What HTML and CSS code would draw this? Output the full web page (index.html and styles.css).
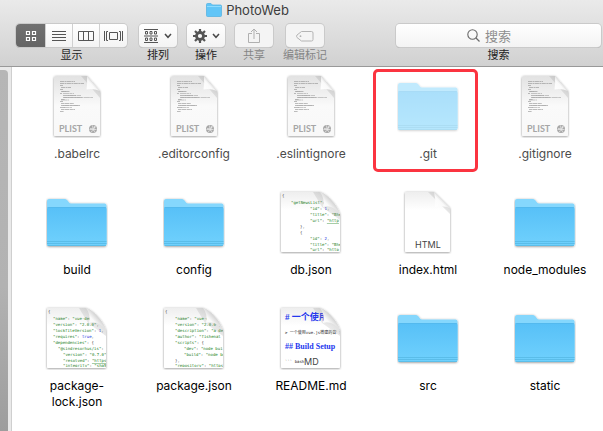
FILE: index.html
```html
<!DOCTYPE html>
<html lang="zh-CN">
<head>
<meta charset="utf-8">
<title>PhotoWeb</title>
<link rel="stylesheet" href="styles.css">
</head>
<body>
<svg class="defs" width="0" height="0" aria-hidden="true">
  <defs>
    <linearGradient id="folder-front" x1="0" y1="0" x2="0" y2="1">
      <stop offset="0" stop-color="#57c0f7"/><stop offset="1" stop-color="#70d1fd"/>
    </linearGradient>
    <linearGradient id="paper" x1="0" y1="0" x2="0" y2="1">
      <stop offset="0" stop-color="#eeeeee"/><stop offset=".3" stop-color="#ffffff"/>
    </linearGradient>
    <linearGradient id="paper-grey" x1="0" y1="0" x2="0" y2="1">
      <stop offset="0" stop-color="#e2e2e2"/><stop offset=".5" stop-color="#fafafa"/><stop offset="1" stop-color="#f8f8f8"/>
    </linearGradient>
    <linearGradient id="curl" x1="0" y1="1" x2="1" y2="0">
      <stop offset="0" stop-color="#ffffff"/><stop offset=".4" stop-color="#fafafa"/><stop offset=".6" stop-color="#d2d2d2"/>
    </linearGradient>
    <linearGradient id="curl-shade" x1="1" y1="0" x2="0" y2="1">
      <stop offset=".3" stop-color="#888888" stop-opacity=".3"/><stop offset=".9" stop-color="#888888" stop-opacity="0"/>
    </linearGradient>
    <filter id="drop" x="-10%" y="-10%" width="120%" height="120%">
      <feDropShadow dx="0" dy="0.6" stdDeviation="0.8" flood-color="#000" flood-opacity=".45"/>
    </filter>
    <clipPath id="wide-clip"><path d="M2 2H44C50 4 60 16 61 24V61H2Z"/></clipPath>

    <symbol id="folder" viewBox="0 0 62 64">
      <g filter="url(#drop)">
        <path d="M1 11Q1 9 3 9H19Q20.500 9 21.500 10.500L23 12.500Q23.700 13.500 25 13.500H58.500Q60.500 13.500 60.500 15.500V54Q60.500 56 58.500 56H3Q1 56 1 54Z" fill="#85d7fd"/>
      </g>
      <path d="M1 19Q1 17 3 17H58.500Q60.500 17 60.500 19V54Q60.500 56 58.500 56H3Q1 56 1 54Z" fill="url(#folder-front)"/>
      <path d="M1 51.500H60.500M1 53.500H60.500M1.500 55.500H60" stroke="#4badd9" stroke-width=".7" opacity=".75"/>
      <path d="M1.500 17.500H60" stroke="#50b4e8" stroke-width=".6"/>
    </symbol>

    <symbol id="plist" viewBox="0 0 50 64">
      <path filter="url(#drop)" d="M4 2H35L48 17V61Q48 62 47 62H3Q2 62 2 61V4Q2 2 4 2Z" fill="url(#paper-grey)"/>
      <path d="M29 2H35L48 17V24Z" fill="url(#curl-shade)"/>
      <path d="M35 2Q35.500 10 34.500 15.500Q41 14 48 17Z" fill="url(#curl)"/>
      <g stroke="#8b8b8b" stroke-width=".8" fill="none" opacity=".7">
        <path d="M8 7.500H23M8 9.500H32M8 11.500H11M9 13.500H19M8 15.500H11M10 17.500H14M8 19.500H10M11 21.500H24M11 23.500H30" stroke-dasharray="4 .5 2 .4"/>
        <path d="M9 17.500H18M9 25.500H13M8 27.500H11M9 29.500H22M9 31.500H28M8 33.500H13M9 35.500H23M8 37.500H12" stroke-dasharray="3 .4 5 .5"/>
        <path d="M11 19.500H22M15 21.500H29M12 23.500H41M9 26H17M11 31.500H27M11 33.500H20" stroke-dasharray="6 .4 3 .5" opacity=".8"/>
      </g>
      <text x="7" y="58" class="plist-text">PLIST</text>
      <circle cx="41" cy="55" r="4" fill="#a8a8a8"/>
      <path d="M38 54.500Q40.500 56 44 52.500M39 57.500Q42.500 57 42.500 52M40.500 51.500Q40.500 56 43 58M37.500 55.500H44.500" stroke="#eee" stroke-width=".7" fill="none"/>
    </symbol>

    <symbol id="wide-paper" viewBox="0 0 64 64">
      <path filter="url(#drop)" d="M2 2H41C48 4 58 15 61 24V61Q61 62 60 62H3Q2 62 2 61Z" fill="url(#paper)"/>
    </symbol>
    <symbol id="wide-curl" viewBox="0 0 64 64">
      <path d="M34 2H41C48 4 58 15 61 24V30L43 17Z" fill="url(#curl-shade)"/>
      <path d="M41 2Q46 8 44 17Q53 14 61 24C58 15 48 4 41 2Z" fill="url(#curl)"/>
    </symbol>
  </defs>
</svg>

<header class="toolbar">
  <h1 class="title">
    <svg width="16" height="16" viewBox="0 0 16 16"><path d="M.500 2.500Q.500 1.500 1.500 1.500H5L6.500 3H14.500Q15.500 3 15.500 4V13.500Q15.500 14.500 14.500 14.500H1.500Q.500 14.500.500 13.500Z" fill="#61c5f7" stroke="#58b4e2" stroke-width=".8"/><path d="M1 4.500H15" stroke="#8fdcff"/></svg>
    <span>PhotoWeb</span>
  </h1>
  <div class="tools">
    <div class="tool">
      <div class="segments">
        <button class="segment active" aria-label="图标"><svg width="12" height="12" viewBox="0 0 12 12"><path d="M1.500 1.500h3v3h-3zM7.500 1.500h3v3h-3zM1.500 7.500h3v3h-3zM7.500 7.500h3v3h-3z" fill="none" stroke="#fff" stroke-width="1.200"/></svg></button>
        <button class="segment" aria-label="列表"><svg width="14" height="12" viewBox="0 0 14 12"><path d="M0 1.500H14M0 4.500H14M0 7.500H14M0 10.500H14" stroke="#555"/></svg></button>
        <button class="segment" aria-label="分栏"><svg width="16" height="12" viewBox="0 0 16 12"><path d="M.500 1.500H15.500V10.500H.500ZM5.500 1.500V10.500M10.500 1.500V10.500" fill="none" stroke="#555"/></svg></button>
        <button class="segment" aria-label="画廊"><svg width="19" height="12" viewBox="0 0 19 12"><path d="M.500 1V11M18.500 1V11M5.500 2.500H13.500V9.500H5.500ZM4 1.500H2.500V10.500H4M15 1.500H16.500V10.500H15" fill="none" stroke="#555"/></svg></button>
      </div>
      <span class="caption">显示</span>
    </div>
    <div class="tool">
      <button class="button" aria-label="排列">
        <svg width="15" height="14" viewBox="0 0 15 14"><path d="M0 .500H14M0 7H14M0 13.500H14M1.500 2.500h2v2.500h-2zM6 2.500h2v2.500h-2zM10.500 2.500h2v2.500h-2zM1.500 9h2v2.500h-2zM6 9h2v2.500h-2zM10.500 9h2v2.500h-2z" fill="none" stroke="#555"/></svg>
        <svg width="8" height="6" viewBox="0 0 8 6"><path d="M1 1L4 4.300L7 1" fill="none" stroke="#4a4a4a" stroke-width="1.500"/></svg>
      </button>
      <span class="caption">排列</span>
    </div>
    <div class="tool">
      <button class="button" aria-label="操作">
        <svg width="14" height="14" viewBox="0 0 14 14"><circle cx="7" cy="7" r="3.500" fill="none" stroke="#555" stroke-width="2.800"/><path d="M7 0V3M7 11V14M0 7H3M11 7H14M2 2L4.200 4.200M9.800 9.800L12 12M12 2L9.800 4.200M4.200 9.800L2 12" stroke="#555" stroke-width="2.200"/></svg>
        <svg width="8" height="6" viewBox="0 0 8 6"><path d="M1 1L4 4.300L7 1" fill="none" stroke="#4a4a4a" stroke-width="1.500"/></svg>
      </button>
      <span class="caption">操作</span>
    </div>
    <div class="tool disabled">
      <button class="button" aria-label="共享" disabled>
        <svg width="12" height="16" viewBox="0 0 12 16"><path d="M4 5.500H.500V14.500H11.500V5.500H8M6 11V1.500M3 4L6 1L9 4" fill="none" stroke="#b0b0b0"/></svg>
      </button>
      <span class="caption">共享</span>
    </div>
    <div class="tool disabled">
      <button class="button" aria-label="编辑标记" disabled>
        <svg width="18" height="12" viewBox="0 0 18 12"><path d="M5.500 1.500H15.500Q17 1.500 17 3V9.500Q17 11 15.500 11H5.500L1 7.500Q0 6.300 1 5Z" fill="none" stroke="#b4b4b4"/><circle cx="4.500" cy="6.200" r=".9" fill="#b0b0b0"/></svg>
      </button>
      <span class="caption">编辑标记</span>
    </div>
    <div class="tool search">
      <div class="search-box">
        <svg width="13" height="13" viewBox="0 0 13 13"><circle cx="5.500" cy="5.500" r="4.700" fill="none" stroke="#6a6a6a" stroke-width="1.100"/><path d="M9 9L12.500 12.500" stroke="#6a6a6a" stroke-width="1.200"/></svg>
        <input id="search" type="search" placeholder="搜索">
      </div>
      <label class="caption" for="search">搜索</label>
    </div>
  </div>
</header>

<main class="content">
  <div class="scroll-track"><div class="scroll-thumb"></div></div>
  <ul class="files">
    <li class="file hidden-file"><svg width="50" height="64"><use href="#plist"/></svg><span class="name">.babelrc</span></li>
    <li class="file hidden-file"><svg width="50" height="64"><use href="#plist"/></svg><span class="name">.editorconfig</span></li>
    <li class="file hidden-file"><svg width="50" height="64"><use href="#plist"/></svg><span class="name">.eslintignore</span></li>
    <li class="file hidden-file marked"><svg class="faded" width="62" height="64"><use href="#folder"/></svg><span class="name">.git</span></li>
    <li class="file hidden-file"><svg width="50" height="64"><use href="#plist"/></svg><span class="name">.gitignore</span></li>

    <li class="file"><svg width="62" height="64"><use href="#folder"/></svg><span class="name">build</span></li>
    <li class="file"><svg width="62" height="64"><use href="#folder"/></svg><span class="name">config</span></li>
    <li class="file">
      <svg width="64" height="64" viewBox="0 0 64 64">
        <use href="#wide-paper"/>
        <g class="code" clip-path="url(#wide-clip)">
          <text x="3" y="7" class="mark">{</text>
          <text x="12" y="14">"getNewsList"<tspan class="mark">: [</tspan></text>
          <text x="31" y="20">"id"<tspan class="mark">: </tspan><tspan class="value">1</tspan><tspan class="mark">,</tspan></text>
          <text x="31" y="26">"title"<tspan class="mark">: </tspan>"Bhe</text>
          <text x="31" y="32">"url"<tspan class="mark">: </tspan><tspan class="link">"http</tspan></text>
          <text x="21" y="38" class="mark">},</text>
          <text x="21" y="44" class="mark">{</text>
          <text x="31" y="50">"id"<tspan class="mark">: </tspan><tspan class="value">2</tspan><tspan class="mark">,</tspan></text>
          <text x="31" y="56">"title"<tspan class="mark">: </tspan>"Bhe</text>
          <text x="31" y="61">"url"<tspan class="mark">: </tspan><tspan class="link">"http</tspan></text>
        </g>
        <use href="#wide-curl"/>
      </svg>
      <span class="name">db.json</span>
    </li>
    <li class="file">
      <svg width="50" height="64" viewBox="0 0 50 64">
        <path filter="url(#drop)" d="M3 2H31L47 18V61Q47 62 46 62H3Q2 62 2 61V3Q2 2 3 2Z" fill="url(#paper)"/>
        <path d="M25 2H31L47 18V24Z" fill="url(#curl-shade)"/>
        <path d="M31 2Q33 9 32 17Q40 15 47 18Z" fill="url(#curl)"/>
        <text x="12" y="58" class="type-text">HTML</text>
      </svg>
      <span class="name">index.html</span>
    </li>
    <li class="file"><svg width="62" height="64"><use href="#folder"/></svg><span class="name">node_modules</span></li>

    <li class="file">
      <svg width="64" height="64" viewBox="0 0 64 64">
        <use href="#wide-paper"/>
        <g class="code" clip-path="url(#wide-clip)">
          <text x="3" y="7" class="mark">{</text>
          <text x="8" y="14">"name"<tspan class="mark">: </tspan>"vue-dem</text>
          <text x="8" y="20">"version"<tspan class="mark">: </tspan>"2.0.0"<tspan class="mark">,</tspan></text>
          <text x="8" y="26">"lockfileVersion"<tspan class="mark">: </tspan><tspan class="value">1</tspan><tspan class="mark">,</tspan></text>
          <text x="8" y="32">"requires"<tspan class="mark">: </tspan><tspan class="value">true</tspan><tspan class="mark">,</tspan></text>
          <text x="8" y="38">"dependencies"<tspan class="mark">: {</tspan></text>
          <text x="13" y="44">"@sindresorhus/is"<tspan class="mark">: {</tspan></text>
          <text x="18" y="50">"version"<tspan class="mark">: </tspan>"0.7.0"</text>
          <text x="18" y="56">"resolved"<tspan class="mark">: </tspan><tspan class="link">"https</tspan></text>
          <text x="18" y="61">"integrity"<tspan class="mark">: </tspan>"sha5</text>
        </g>
        <use href="#wide-curl"/>
      </svg>
      <span class="name">package-<br>lock.json</span>
    </li>
    <li class="file">
      <svg width="64" height="64" viewBox="0 0 64 64">
        <use href="#wide-paper"/>
        <g class="code" clip-path="url(#wide-clip)">
          <text x="3" y="7" class="mark">{</text>
          <text x="13" y="14">"name"<tspan class="mark">: </tspan>"vue-d</text>
          <text x="13" y="20">"version"<tspan class="mark">: </tspan>"2.0.0"<tspan class="mark">,</tspan></text>
          <text x="13" y="26">"description"<tspan class="mark">: </tspan>"a de</text>
          <text x="13" y="32">"author"<tspan class="mark">: </tspan>"fishenal &lt;</text>
          <text x="13" y="38">"scripts"<tspan class="mark">: {</tspan></text>
          <text x="22" y="44">"dev"<tspan class="mark">: </tspan>"node bui</text>
          <text x="22" y="50">"build"<tspan class="mark">: </tspan>"node bu</text>
          <text x="13" y="56" class="mark">},</text>
          <text x="13" y="61">"repository"<tspan class="mark">: </tspan><tspan class="link">"https</tspan></text>
        </g>
        <use href="#wide-curl"/>
      </svg>
      <span class="name">package.json</span>
    </li>
    <li class="file">
      <svg width="64" height="64" viewBox="0 0 64 64">
        <use href="#wide-paper"/>
        <g clip-path="url(#wide-clip)">
          <text x="6" y="14" class="md-title"># 一个使用</text>
          <text x="6" y="28" class="md-body">&gt; 一个使用vue.js搭建的音乐</text>
          <text x="6" y="43" class="md-head">## Build Setup</text>
          <path d="M57.500 22H60.500V50H57.500Z" fill="#fff"/>
          <text x="6" y="57" class="md-body">``` bash</text>
          <text x="25" y="59" class="type-text">MD</text>
        </g>
        <use href="#wide-curl"/>
      </svg>
      <span class="name">README.md</span>
    </li>
    <li class="file"><svg width="62" height="64"><use href="#folder"/></svg><span class="name">src</span></li>
    <li class="file"><svg width="62" height="64"><use href="#folder"/></svg><span class="name">static</span></li>
  </ul>
</main>
</body>
</html>
```
FILE: styles.css
```css
*,
*::after {
  box-sizing: border-box;
}

body {
  margin: 0;
  min-height: 100vh;
  display: flex;
  flex-direction: column;
  background: #fff;
  color: #000;
  font-family: Inter, "Noto Sans CJK SC", sans-serif;
  font-size: 12px;
}

.defs {
  position: absolute;
}

.toolbar {
  height: 67px;
  border-bottom: 1px solid #999;
  background: linear-gradient(#eaeaea, #d1d1d1);
}

.title {
  display: flex;
  align-items: center;
  justify-content: center;
  gap: 4px;
  height: 20px;
  margin: 0;
  padding-right: 108px;
  color: #3c3c3c;
  font-size: 13px;
  font-weight: 400;
}

.tools {
  display: flex;
  gap: 10px;
  padding: 4px 2px 0 16px;
}

.tool {
  display: flex;
  flex-direction: column;
  align-items: center;
}

.tool:first-child {
  margin-right: 2px;
}

.caption {
  color: #222;
  font-size: 11px;
  line-height: 17px;
}

.disabled .caption {
  color: #858585;
}

.segments,
.button,
.search-box {
  display: flex;
  align-items: center;
  justify-content: center;
  height: 23px;
  border: 0;
  border-radius: 4px;
  background: linear-gradient(#fff, #f3f3f3);
  box-shadow: 0 0 0 1px #cacaca, 0 1px 0 #aaa;
}

.segments {
  overflow: hidden;
}

.segment {
  display: flex;
  align-items: center;
  justify-content: center;
  width: 27px;
  height: 23px;
  padding: 0;
  border: 0;
  border-right: 1px solid #d0d0d0;
  background: transparent;
}

.segment.active {
  width: 30px;
  background: linear-gradient(#717171, #656565);
}

.segment:last-child {
  border-right: 0;
}

.button {
  gap: 5px;
  width: 38px;
  padding: 0;
}

.disabled .button {
  background: #f4f4f4;
}

.search {
  flex: 0 1 205px;
  margin-left: auto;
}

.search-box {
  gap: 5px;
  width: 100%;
}

.search input {
  width: 45px;
  padding: 0;
  border: 0;
  outline: 0;
  appearance: none;
  background: transparent;
  font: inherit;
  font-size: 13px;
}

.search input::placeholder {
  color: #8e8e8e;
}

.content {
  flex: 1;
  display: flex;
}

.scroll-track {
  display: flex;
  width: 12px;
  padding-top: 3px;
  border-right: 1px solid #cfcfcf;
  background: #e9e9e9;
}

.scroll-thumb {
  width: 8px;
  border-radius: 0 4px 0 0;
  background: linear-gradient(#b6b6b6, #b2b2b2 60%, #9d9d9d);
}

.files {
  flex: 1;
  display: grid;
  grid-template-columns: repeat(5, 1fr);
  grid-auto-rows: 116px;
  margin: 0;
  padding: 7px 0 0 6px;
  list-style: none;
}

.file {
  position: relative;
  display: flex;
  flex-direction: column;
  align-items: center;
  gap: 8px;
  padding-left: 1px;
}

.file svg {
  flex: none;
}

.name {
  font-size: 12px;
  line-height: 16px;
  text-align: center;
}

.hidden-file .name {
  color: #4c4c4c;
}

.faded {
  opacity: .5;
}

.marked::after {
  content: "";
  position: absolute;
  top: -5px;
  left: 4px;
  width: 105px;
  height: 103px;
  border: 3px solid #fb3440;
  border-radius: 5px;
}

.plist-text {
  fill: #a6a6a6;
  font-family: Lato, sans-serif;
  font-size: 9px;
  font-weight: 700;
}

.type-text {
  fill: #444;
  font-family: Inter, sans-serif;
  font-size: 9px;
}

.code {
  fill: #238023;
  font-family: "DejaVu Sans Mono", monospace;
  font-size: 4px;
}

.mark {
  fill: #444;
}

.value {
  fill: #2030e0;
}

.link {
  text-decoration: underline;
}

.md-title,
.md-head {
  fill: #2438ee;
  font-family: "Liberation Serif", "Noto Sans CJK SC", serif;
  font-weight: 700;
}

.md-title {
  font-size: 9px;
}

.md-head {
  font-size: 8px;
}

.md-body {
  fill: #222;
  font-family: "DejaVu Sans Mono", "Noto Sans CJK SC", monospace;
  font-size: 4px;
}
```
